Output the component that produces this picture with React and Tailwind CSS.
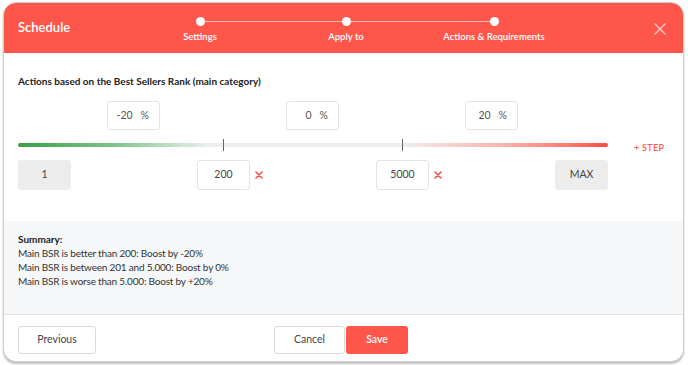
import React from "react";

const font = { fontFamily: "Lato, 'Noto Sans', sans-serif" };

function PctBox({ value }) {
  return (
    <div className="w-[53px] h-[29px] border border-[#e3e3e8] rounded-[3px] bg-white flex items-center justify-end pr-[10px] text-[10.5px] text-[#555]">
      <span>{value}</span>
      <span className="ml-[8px]">%</span>
    </div>
  );
}

function ValBox({ value, gray, remove }) {
  return (
    <div className="relative">
      <div
        className={
          "w-[53px] h-[30px] rounded-[3px] flex items-center justify-center text-[10.5px] text-[#444] " +
          (gray ? "bg-[#ececec]" : "bg-white border border-[#e3e3e8]")
        }
      >
        {value}
      </div>
      {remove && (
        <svg className="absolute left-[58px] top-[11px]" width="8" height="8" viewBox="0 0 8 8">
          <path d="M1 1L7 7M7 1L1 7" stroke="#f2544c" strokeWidth="1.6" strokeLinecap="round" />
        </svg>
      )}
    </div>
  );
}

export default function App() {
  return (
    <div className="w-[688px] h-[365px] bg-white pl-[3px] pt-[2px]" style={font}>
      <div className="w-[681px] h-[360px] rounded-[13px] border border-[#cfcfcf] shadow-[0_2px_2px_rgba(0,0,0,0.25)] overflow-hidden flex flex-col bg-white">
        {/* Header */}
        <div className="h-[50px] bg-[#ff564b] flex relative shrink-0">
          <div className="pl-[14px] pt-[15px] text-white text-[13px] font-semibold">Schedule</div>
          <div className="absolute left-[196px] top-[18px] w-[294px] h-[1px] bg-[#ffb3ad]" />
          {[196, 342, 490].map((x, i) => (
            <div key={i} className="absolute top-[14px] w-[9px] h-[9px] rounded-full bg-white" style={{ left: x - 4 }} />
          ))}
          {[
            ["Settings", 196],
            ["Apply to", 342],
            ["Actions & Requirements", 490],
          ].map(([t, x]) => (
            <div key={t} className="absolute top-[27px] w-[160px] text-center text-white text-[9.5px] font-semibold" style={{ left: x - 80 }}>
              {t}
            </div>
          ))}
          <svg className="absolute left-[650px] top-[20px]" width="12" height="12" viewBox="0 0 12 12">
            <path d="M0.5 0.5L11.5 11.5M11.5 0.5L0.5 11.5" stroke="#ffd0cc" strokeWidth="1.2" />
          </svg>
        </div>

        {/* Body */}
        <div className="h-[168px] px-[14px] pt-[21px] shrink-0">
          <div className="text-[10px] font-bold text-[#222]">Actions based on the Best Sellers Rank (main category)</div>
          <div className="flex items-start mt-[12px]">
            <div className="w-[590px]">
              <div className="flex gap-[126px] pl-[89px]">
                <PctBox value="-20" />
                <PctBox value="0" />
                <PctBox value="20" />
              </div>
              <div className="relative h-[30px]">
                <div className="absolute left-0 right-0 top-[13px] h-[4px] rounded-full bg-[#eeeeee]" />
                <div className="absolute left-0 w-[190px] top-[13px] h-[4px] rounded-full bg-gradient-to-r from-[#36a047] via-[#7cc487] to-[#eeeeee]" />
                <div className="absolute left-[385px] right-0 top-[13px] h-[4px] rounded-full bg-gradient-to-r from-[#eeeeee] via-[#fbb1ac] to-[#ff4a40]" />
                <div className="absolute left-[205px] top-[9px] w-[1px] h-[12px] bg-[#666]" />
                <div className="absolute left-[384px] top-[9px] w-[1px] h-[12px] bg-[#666]" />
              </div>
              <div className="flex justify-between">
                <ValBox value="1" gray />
                <ValBox value="200" remove />
                <ValBox value="5000" remove />
                <ValBox value="MAX" gray />
              </div>
            </div>
            <div className="ml-[26px] mt-[40px] text-[9px] text-[#ff5a50] font-semibold tracking-[0.3px]">+ STEP</div>
          </div>
        </div>

        {/* Summary */}
        <div className="h-[94px] bg-[#f6f7f9] border-b border-[#e3e4e8] px-[14px] pt-[11px] text-[10px] tracking-[-0.2px] leading-[14px] text-[#333] shrink-0">
          <div className="font-bold text-[#222] tracking-normal">Summary:</div>
          <div>Main BSR is better than 200: Boost by -20%</div>
          <div>Main BSR is between 201 and 5.000: Boost by 0%</div>
          <div>Main BSR is worse than 5.000: Boost by +20%</div>
        </div>

        {/* Footer */}
        <div className="flex-1 flex items-start pt-[11px] px-[14px]">
          <button className="w-[78px] h-[28px] border border-[#d9d9dd] rounded-[3px] bg-white text-[10.5px] text-[#444]">Previous</button>
          <button className="ml-[178px] w-[71px] h-[28px] border border-[#d9d9dd] rounded-[3px] bg-white text-[10.5px] text-[#444]">Cancel</button>
          <button className="ml-[1px] w-[62px] h-[28px] rounded-[3px] bg-[#ff564b] text-[10.5px] text-white font-semibold">Save</button>
        </div>
      </div>
    </div>
  );
}
